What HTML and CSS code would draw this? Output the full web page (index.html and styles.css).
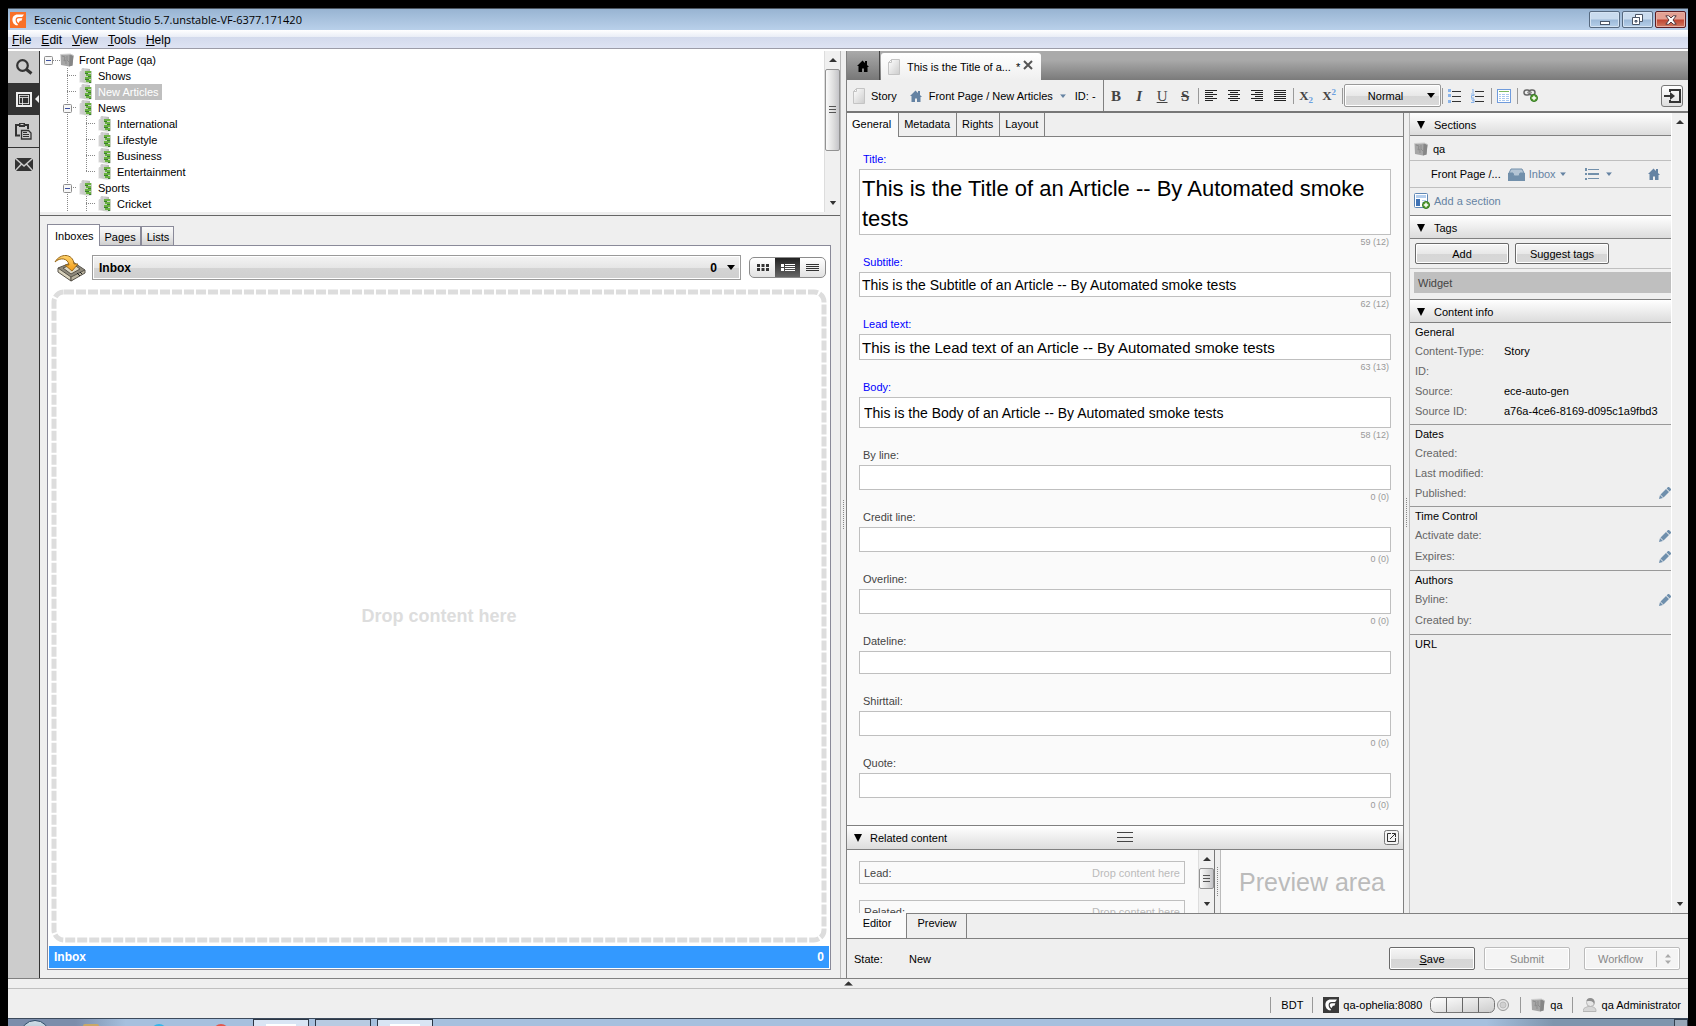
FILE: index.html
```html
<!DOCTYPE html>
<html lang="en">
<head>
<meta charset="utf-8">
<title>Escenic Content Studio</title>
<link rel="stylesheet" href="styles.css">
</head>
<body>
<svg class="defs" aria-hidden="true">
  <defs>
    <linearGradient id="g-grey" x1="0" y1="0" x2="1" y2="1"><stop offset="0" stop-color="#fff"/><stop offset="1" stop-color="#ccc"/></linearGradient>
    <linearGradient id="g-shield" x1="0" y1="0" x2="1" y2="0"><stop offset="0" stop-color="#f0f0f0"/><stop offset="1" stop-color="#a8a8a8"/></linearGradient>
    <linearGradient id="g-arrow" x1="0" y1="0" x2="0" y2="1"><stop offset="0" stop-color="#ffd36b"/><stop offset="1" stop-color="#f39a13"/></linearGradient>
    <symbol id="i-logo" viewBox="0 0 16 16"><path d="M14 2.6H7.6C4.3 2.6 2.4 5 2.4 7.8c0 3 2 5.4 5 5.8l.6-1.4C6.500 11.400 5.600 9.900 5.600 8c0-2 1-3.100 3-3.100h3.600z" fill="#fff"/><path d="M12.400 6.200H8.800c-1.300 0-2 .8-2 1.900 0 1.400.7 2.400 1.800 3l1.300-2.400h1.500z" fill="#fff"/></symbol>
    <symbol id="i-section" viewBox="0 0 14 16"><path d="M0 4l2-1V1l2-1 7 1v2l2 1v11l-4 .5-9-1z" fill="url(#g-shield)"/><path d="M2 3v11M4 0v14" stroke="#bdbdbd" fill="none"/><path d="M5 3h8v12H5z" fill="#c9d2c4"/><path d="M6 3h6v2H6zM7 6h5v2H7zM6 9h6v2H6zM7 12h5v2H7z" fill="#69b23f"/><path d="M6 5h3v1H6zM9 8h3v1H9zM6 11h4v1H6zM10 14h2v1h-2z" fill="#3b7a34"/></symbol>
    <symbol id="i-pub" viewBox="0 0 14 14"><path d="M.5 1.500l10-.5 3 1.500-1 10-3.500 1-8-1.500z" fill="#a6a6a6"/><path d="M9.500 2l4 .5-1 10-3.500 1z" fill="#868686"/><path d="M2 3l3 1-1 4 2-1v4M7 3v4l2 2" stroke="#8d8d8d" fill="none"/><path d="M.5 1.500l10-.5 3 1.500" stroke="#cfcfcf" fill="none"/></symbol>
    <symbol id="i-doc" viewBox="0 0 12 16"><path d="M3.500.5h8v15h-11v-12z" fill="url(#g-grey)" stroke="#c4c4c4"/><path d="M.5 3.500h3v-3z" fill="#fff" stroke="#c4c4c4"/></symbol>
    <symbol id="i-house" viewBox="0 0 12 12"><path d="M0 6l5.500-5.500L8 3V1h2v4l2 2h-1.500v5H7V8.500H5V12H1.500V6z" fill="currentColor"/></symbol>
    <symbol id="i-pencil" viewBox="0 0 12 12"><path d="M0 12l1-4 3 3zM1.500 7.500L7 2l3 3-5.500 5.500zM7.600 1.400L9 0h1l2 2v1l-1.400 1.400z" fill="#6f8fac"/></symbol>
    <symbol id="i-down" viewBox="0 0 8 5"><path d="M0 0h8L4 5z" fill="currentColor"/></symbol>
    <symbol id="i-tri" viewBox="0 0 8 8"><path d="M0 0h8L4 8z" fill="#000"/></symbol>
    <symbol id="i-up" viewBox="0 0 8 4"><path d="M0 4h8L4 0z" fill="#333"/></symbol>
    <symbol id="i-plus" viewBox="0 0 8 8"><circle cx="4" cy="4" r="3.500" fill="#5a9e32" stroke="#2f7a1e"/><path d="M4 1.800v4.400M1.800 4h4.400" stroke="#fff" stroke-width="1.400"/></symbol>
    <symbol id="i-minus" viewBox="0 0 9 9"><rect x=".5" y=".5" width="8" height="8" rx="1" fill="#f7f7f7" stroke="#8e8e8e"/><path d="M2 4.500h5" stroke="#3b4fa0"/></symbol>
  </defs>
</svg>

<div class="desktop">
  <div class="window">
    <header class="titlebar">
      <svg class="app-logo" width="16" height="16"><use href="#i-logo"/></svg>
      <h1 class="window-title">Escenic Content Studio 5.7.unstable-VF-6377.171420</h1>
      <div class="window-buttons">
        <button class="win-btn" aria-label="Minimize"><svg width="12" height="14" viewBox="0 0 12 14"><rect x="1.500" y="8.500" width="9" height="3" fill="#fff" stroke="#4a5566"/></svg></button>
        <button class="win-btn" aria-label="Restore"><svg width="14" height="12" viewBox="0 0 14 12"><path d="M4.500.5h7v7h-3v-4h-4z" fill="#fff" stroke="#4a5566"/><path d="M1.500 3.500h7v7h-7zM4 6.500v1.500h2V6.500z" fill="#fff" stroke="#4a5566"/></svg></button>
        <button class="win-btn win-close" aria-label="Close"><svg width="12" height="10" viewBox="0 0 12 10"><path d="M.8.8h3L6 3 8.200.8h3L8 5l3.200 4.200h-3L6 7 3.800 9.200h-3L4 5z" fill="#fff" stroke="#54393f"/></svg></button>
      </div>
    </header>

    <nav class="menubar" aria-label="Main menu">
      <button><u>F</u>ile</button><button><u>E</u>dit</button><button><u>V</u>iew</button><button><u>T</u>ools</button><button><u>H</u>elp</button>
    </nav>

    <main class="workspace">
      <nav class="rail" aria-label="Panels">
        <button class="rail-btn" aria-label="Search"><svg width="18" height="18" viewBox="0 0 18 18"><circle cx="7.500" cy="7.500" r="5.300" fill="none" stroke="#333" stroke-width="2.200"/><path d="M11.500 11.500l5 4" stroke="#333" stroke-width="3"/></svg></button>
        <button class="rail-btn rail-active" aria-label="Sections"><svg width="16" height="15" viewBox="0 0 16 15"><path d="M1 1h14v13H1z" fill="none" stroke="#eee" stroke-width="2"/><path d="M3 5.500h10M6.500 6v7M3.500 3v9M12.500 3v9M3 3.500h10M3 11.500h10" stroke="#eee" stroke-opacity=".8" fill="none"/></svg></button>
        <button class="rail-btn rail-last" aria-label="Clipboard"><svg width="17" height="17" viewBox="0 0 17 17"><path d="M5 12.500H1V2h12v4" fill="none" stroke="#333" stroke-width="2"/><path d="M4 0h6v4H4z" fill="#333"/><path d="M5.500 1.500h3" stroke="#ccc"/><path d="M6.500 7.500h7l2.500 2.500v6H6.500z" fill="#ccc" stroke="#333" stroke-width="1.300"/><path d="M8 9.500h4M8 11.500h6M8 13.500h6" stroke="#333"/></svg></button>
        <button class="rail-btn" aria-label="Messages"><svg width="18" height="13" viewBox="0 0 18 13"><path d="M0 0h18v13H0z" fill="#333"/><path d="M0 0l9 8 9-8M0 13l6.500-7M18 13l-6.500-7" fill="none" stroke="#ccc" stroke-width="1.500"/></svg></button>
      </nav>

      <section class="left">
        <div class="tree-pane">
          <ul class="tree" aria-label="Sections">
            <li class="row"><svg class="toggle root" width="9" height="9"><use href="#i-minus"/></svg><i class="stub"></i><svg class="ticon" width="14" height="14"><use href="#i-pub"/></svg><a href="#">Front Page (qa)</a></li>
            <li class="row"><i class="gap"></i><i class="branch"></i><svg class="ticon" width="14" height="16"><use href="#i-section"/></svg><a href="#">Shows</a></li>
            <li class="row"><i class="gap"></i><i class="branch"></i><svg class="ticon" width="14" height="16"><use href="#i-section"/></svg><a href="#" class="selected">New Articles</a></li>
            <li class="row"><i class="gap"></i><i class="branch"><svg width="9" height="9"><use href="#i-minus"/></svg></i><svg class="ticon" width="14" height="16"><use href="#i-section"/></svg><a href="#">News</a></li>
            <li class="row"><i class="gap"></i><i class="guide"></i><i class="branch"></i><svg class="ticon" width="14" height="16"><use href="#i-section"/></svg><a href="#">International</a></li>
            <li class="row"><i class="gap"></i><i class="guide"></i><i class="branch"></i><svg class="ticon" width="14" height="16"><use href="#i-section"/></svg><a href="#">Lifestyle</a></li>
            <li class="row"><i class="gap"></i><i class="guide"></i><i class="branch"></i><svg class="ticon" width="14" height="16"><use href="#i-section"/></svg><a href="#">Business</a></li>
            <li class="row"><i class="gap"></i><i class="guide"></i><i class="branch end"></i><svg class="ticon" width="14" height="16"><use href="#i-section"/></svg><a href="#">Entertainment</a></li>
            <li class="row"><i class="gap"></i><i class="branch"><svg width="9" height="9"><use href="#i-minus"/></svg></i><svg class="ticon" width="14" height="16"><use href="#i-section"/></svg><a href="#">Sports</a></li>
            <li class="row"><i class="gap"></i><i class="guide"></i><i class="branch"></i><svg class="ticon" width="14" height="16"><use href="#i-section"/></svg><a href="#">Cricket</a></li>
          </ul>
          <div class="scrollbar" aria-hidden="true">
            <svg width="8" height="4"><use href="#i-up"/></svg>
            <div class="thumb thumb-tree"></div>
            <svg class="sb-down" width="8" height="4" viewBox="0 0 8 5"><use href="#i-down"/></svg>
          </div>
        </div>

        <div class="lists-pane">
          <div class="tabs" role="tablist">
            <button class="tab tab-on" role="tab" aria-selected="true">Inboxes</button>
            <button class="tab" role="tab">Pages</button>
            <button class="tab" role="tab">Lists</button>
          </div>
          <div class="inbox-panel">
            <div class="inbox-bar">
              <svg width="32" height="28" viewBox="0 0 32 28"><path d="M4 14l15-6 12 8-14 11z" fill="#8f8a7c" stroke="#57534a"/><path d="M4 14l13 9v4L4 18z" fill="#d8d2bc" stroke="#57534a"/><path d="M17 23l14-7v3L17 27z" fill="#b9b39e" stroke="#57534a"/><path d="M9 14l10-4 7 5-9 5z" fill="#dcd6c2" stroke="#57534a"/><path d="M23 19l3 3M26 18l2 2" stroke="#222"/><path d="M1 8C6-1 19-1 20 10h4l-6 7-7-6h4C14 4 6 3 1 8z" fill="url(#g-arrow)" stroke="#9a6a1c"/></svg>
              <div class="inbox-select">
                <select aria-label="Inbox"><option>Inbox</option></select>
                <span>0</span>
                <svg width="8" height="5"><use href="#i-down"/></svg>
              </div>
              <div class="view-switch">
                <button aria-label="Grid"><svg width="12" height="7" viewBox="0 0 12 7"><path d="M0 0h3v3H0zM4.500 0h3v3h-3zM9 0h3v3H9zM0 4h3v3H0zM4.500 4h3v3h-3zM9 4h3v3H9z" fill="#333"/></svg></button>
                <button class="on" aria-label="Detailed list"><svg width="14" height="8" viewBox="0 0 14 8"><path d="M0 0h3v3H0zM0 4h3v3H0zM4 0h10v1H4zM4 2h10v1H4zM4 4h10v1H4zM4 6h10v1H4z" fill="#fff"/></svg></button>
                <button aria-label="List"><svg width="13" height="8" viewBox="0 0 13 8"><path d="M0 .5h13M0 2.500h13M0 4.500h13M0 6.500h13" stroke="#333"/></svg></button>
              </div>
            </div>
            <div class="dropzone">
              <svg class="dash" aria-hidden="true"><rect class="dash-rect" x="3" y="3" rx="10"/></svg>
              <p>Drop content here</p>
            </div>
            <div class="inbox-total"><span>Inbox</span><span>0</span></div>
          </div>
        </div>
      </section>

      <div class="splitter"><i class="grip"></i></div>

      <section class="right">
        <div class="doc-tabs">
          <button class="home-tab" aria-label="Home"><svg width="12" height="12"><use href="#i-house"/></svg></button>
          <div class="doc-tab">
            <svg width="12" height="16"><use href="#i-doc"/></svg>
            <span class="doc-name">This is the Title of a...</span><span>*</span>
            <button aria-label="Close tab"><svg width="10" height="10" viewBox="0 0 10 10"><path d="M1 1l8 8M9 1L1 9" stroke="#555" stroke-width="2"/></svg></button>
          </div>
        </div>

        <div class="toolbar">
          <div class="crumbs">
            <svg width="12" height="16"><use href="#i-doc"/></svg><span class="kind">Story</span>
            <svg class="blue" width="12" height="12"><use href="#i-house"/></svg><a class="path" href="#">Front Page / New Articles</a>
            <svg class="blue" width="6" height="4" viewBox="0 0 8 5"><use href="#i-down"/></svg><span class="doc-id">ID: -</span>
          </div>
          <button class="tool serif" aria-label="Bold"><b>B</b></button>
          <button class="tool serif" aria-label="Italic"><b><em>I</em></b></button>
          <button class="tool serif" aria-label="Underline"><u>U</u></button>
          <button class="tool serif" aria-label="Strikethrough"><s>S</s></button>
          <i class="sep"></i>
          <button class="tool" aria-label="Align left"><svg width="12" height="12" viewBox="0 0 12 12"><path d="M0 .5h12M0 2.500h8M0 4.500h12M0 6.500h8M0 8.500h12M0 10.500h8" stroke="#222"/></svg></button>
          <button class="tool" aria-label="Align centre"><svg width="12" height="12" viewBox="0 0 12 12"><path d="M0 .5h12M2 2.500h8M0 4.500h12M2 6.500h8M0 8.500h12M2 10.500h8" stroke="#222"/></svg></button>
          <button class="tool" aria-label="Align right"><svg width="12" height="12" viewBox="0 0 12 12"><path d="M0 .5h12M4 2.500h8M0 4.500h12M4 6.500h8M0 8.500h12M4 10.500h8" stroke="#222"/></svg></button>
          <button class="tool" aria-label="Justify"><svg width="12" height="12" viewBox="0 0 12 12"><path d="M0 .5h12M0 2.500h12M0 4.500h12M0 6.500h12M0 8.500h12M0 10.500h12" stroke="#222"/></svg></button>
          <i class="sep"></i>
          <button class="tool script" aria-label="Subscript"><b>X</b><sub>2</sub></button>
          <button class="tool script" aria-label="Superscript"><b>X</b><sup>2</sup></button>
          <i class="sep"></i>
          <div class="style-select"><select aria-label="Paragraph style"><option>Normal</option></select><svg width="8" height="5"><use href="#i-down"/></svg></div>
          <i class="sep"></i>
          <button class="tool" aria-label="Bulleted list"><svg width="14" height="14" viewBox="0 0 14 14"><path d="M0 0h3v3H0zM0 5h3v3H0zM0 11h3v3H0z" fill="#8ab4ea"/><path d="M4 2.500h9M4 7.500h9M4 12.500h9" stroke="#333"/></svg></button>
          <button class="tool" aria-label="Numbered list"><svg width="14" height="14" viewBox="0 0 14 14"><path d="M1 0h1v4M0 5h3v1.500H.5V9H3M0 10h3v3.500H0M1 11.700h2" fill="none" stroke="#8ab4ea"/><path d="M4 2.500h9M4 7.500h9M4 12.500h9" stroke="#333"/></svg></button>
          <i class="sep"></i>
          <button class="tool" aria-label="Insert table"><svg width="14" height="14" viewBox="0 0 14 14"><rect x=".5" y=".5" width="13" height="13" fill="#fff" stroke="#6f9bdc"/><path d="M2 2.500h10" stroke="#7cb860"/><path d="M2 5.500h10M2 7.500h10M2 9.500h10M2 11.500h10" stroke="#a9c8ef"/><path d="M4.500 4v8M8.500 4v8" stroke="#fff"/></svg></button>
          <i class="sep"></i>
          <button class="tool" aria-label="Insert link"><svg width="15" height="13" viewBox="0 0 15 13"><rect x="1" y="1" width="6" height="5" rx="2.500" fill="none" stroke="#666" stroke-width="1.500"/><rect x="6" y="1" width="6" height="5" rx="2.500" fill="none" stroke="#666" stroke-width="1.500"/><path d="M4 3.500h5" stroke="#999" stroke-width="1.500"/><use href="#i-plus" x="7" y="5" width="8" height="8"/></svg></button>
          <button class="dock" aria-label="Toggle side panel"><svg width="17" height="14" viewBox="0 0 17 14"><path d="M6 3V1h10v12H6v-2" fill="none" stroke="#333" stroke-width="2"/><path d="M0 6h6V3l5 4-5 4V8H0z" fill="#333"/></svg></button>
        </div>

        <div class="doc-body">
          <div class="editor">
            <div class="subtabs" role="tablist">
              <button class="on" role="tab" aria-selected="true">General</button><button role="tab">Metadata</button><button role="tab">Rights</button><button role="tab">Layout</button>
            </div>
            <form class="fields">
              <div class="field req"><label for="f1">Title:</label><textarea id="f1" class="f-title" rows="2">This is the Title of an Article -- By Automated smoke tests</textarea><output>59 (12)</output></div>
              <div class="field req"><label for="f2">Subtitle:</label><input id="f2" class="f-sub" value="This is the Subtitle of an Article -- By Automated smoke tests"><output>62 (12)</output></div>
              <div class="field req"><label for="f3">Lead text:</label><input id="f3" class="f-lead" value="This is the Lead text of an Article -- By Automated smoke tests"><output>63 (13)</output></div>
              <div class="field req"><label for="f4">Body:</label><input id="f4" class="f-body" value="This is the Body of an Article -- By Automated smoke tests"><output>58 (12)</output></div>
              <div class="field"><label for="f5">By line:</label><input id="f5"><output>0 (0)</output></div>
              <div class="field"><label for="f6">Credit line:</label><input id="f6"><output>0 (0)</output></div>
              <div class="field"><label for="f7">Overline:</label><input id="f7"><output>0 (0)</output></div>
              <div class="field"><label for="f8">Dateline:</label><input id="f8" class="f-date"><output></output></div>
              <div class="field"><label for="f9">Shirttail:</label><input id="f9"><output>0 (0)</output></div>
              <div class="field"><label for="f10">Quote:</label><input id="f10"><output>0 (0)</output></div>
            </form>
            <section class="related">
              <header class="related-head">
                <h2><svg width="8" height="8"><use href="#i-tri"/></svg>Related content</h2>
                <svg width="16" height="11" viewBox="0 0 16 11"><path d="M0 .5h16M0 5.500h16M0 9.500h16" stroke="#444"/></svg>
                <button aria-label="Open in window"><svg width="15" height="15" viewBox="0 0 15 15"><rect x=".5" y=".5" width="14" height="14" rx="2" fill="#f4f4f4" stroke="#777"/><path d="M7 3.500H3.500v8h8V8M6 9l5-5M8 3.500h3.500V7" fill="none" stroke="#333"/></svg></button>
              </header>
              <div class="related-body">
                <div class="relations">
                  <div class="relation"><span>Lead:</span><span class="hint">Drop content here</span></div>
                  <div class="relation"><span>Related:</span><span class="hint">Drop content here</span></div>
                </div>
                <div class="scrollbar" aria-hidden="true">
                  <svg width="8" height="4"><use href="#i-up"/></svg>
                  <div class="thumb thumb-rel"></div>
                  <svg class="sb-down" width="8" height="4" viewBox="0 0 8 5"><use href="#i-down"/></svg>
                </div>
                <div class="splitter thin"><i class="grip"></i></div>
                <div class="preview">Preview area</div>
              </div>
            </section>
          </div>

          <div class="splitter side"><i class="grip"></i></div>

          <aside class="side-panel">
            <div class="side-content">
              <section>
                <h2 class="side-head"><svg width="8" height="8"><use href="#i-tri"/></svg>Sections</h2>
                <div class="srow s-pub"><svg width="14" height="14"><use href="#i-pub"/></svg>qa</div>
                <div class="srow s-home">
                  <span class="s-path">Front Page /...</span>
                  <svg width="17" height="13" viewBox="0 0 17 13"><path d="M3 1h11l2 4h-4l-1 3H6L5 5H1z" fill="#b4c5d4" stroke="#7290ab"/><path d="M0 5h5l1 3h5l1-3h5v8H0z" fill="#7290ab"/></svg>
                  <a href="#" class="blue s-inbox">Inbox</a>
                  <svg class="blue s-arrow" width="6" height="4" viewBox="0 0 8 5"><use href="#i-down"/></svg>
                  <svg width="14" height="12" viewBox="0 0 14 12"><path d="M0 0h2v3H0zM0 5h2v2H0zM0 10h2v2H0zM3 1h11v1H3zM3 5h11v2H3zM3 10h11v1H3z" fill="#7290ab"/></svg>
                  <svg class="blue s-arrow2" width="6" height="4" viewBox="0 0 8 5"><use href="#i-down"/></svg>
                  <svg class="blue s-house" width="12" height="12"><use href="#i-house"/></svg>
                </div>
                <div class="srow s-add"><svg width="16" height="16" viewBox="0 0 16 16"><rect x=".5" y=".5" width="13" height="14" rx="1" fill="#fff" stroke="#5f87b4"/><path d="M2 2h10v3H2z" fill="#b5cfee"/><path d="M2 6h4v7H2z" fill="#3f72b5"/><path d="M8 7.500h4M8 9.500h4" stroke="#b5cfee"/><use href="#i-plus" x="8" y="8" width="8" height="8"/></svg><a href="#" class="blue">Add a section</a></div>
              </section>
              <section>
                <h2 class="side-head"><svg width="8" height="8"><use href="#i-tri"/></svg>Tags</h2>
                <div class="tag-buttons"><button class="btn">Add</button><button class="btn">Suggest tags</button></div>
                <div class="tags"><span class="tag">Widget</span></div>
              </section>
              <section>
                <h2 class="side-head"><svg width="8" height="8"><use href="#i-tri"/></svg>Content info</h2>
                <div class="info"><h3>General</h3><dl>
                  <dt>Content-Type:</dt><dd>Story</dd><dt>ID:</dt><dd></dd><dt>Source:</dt><dd>ece-auto-gen</dd><dt>Source ID:</dt><dd>a76a-4ce6-8169-d095c1a9fbd3</dd></dl></div>
                <div class="info"><h3>Dates</h3><dl>
                  <dt>Created:</dt><dd></dd><dt>Last modified:</dt><dd></dd><dt>Published:</dt><dd><button aria-label="Edit published date"><svg width="12" height="12"><use href="#i-pencil"/></svg></button></dd></dl></div>
                <div class="info tall"><h3>Time Control</h3><dl>
                  <dt>Activate date:</dt><dd><button aria-label="Edit activate date"><svg width="12" height="12"><use href="#i-pencil"/></svg></button></dd><dt>Expires:</dt><dd><button aria-label="Edit expiry"><svg width="12" height="12"><use href="#i-pencil"/></svg></button></dd></dl></div>
                <div class="info tall"><h3>Authors</h3><dl>
                  <dt>Byline:</dt><dd><button aria-label="Edit byline"><svg width="12" height="12"><use href="#i-pencil"/></svg></button></dd><dt>Created by:</dt><dd></dd></dl></div>
                <div class="info last"><h3>URL</h3></div>
              </section>
            </div>
            <div class="scrollbar wide" aria-hidden="true">
              <svg width="8" height="4"><use href="#i-up"/></svg>
              <svg class="sb-down" width="8" height="4" viewBox="0 0 8 5"><use href="#i-down"/></svg>
            </div>
          </aside>
        </div>

        <div class="mode-tabs" role="tablist"><button class="on" role="tab" aria-selected="true">Editor</button><button role="tab">Preview</button></div>

        <div class="state-bar">
          <span class="state-label">State:</span><span>New</span>
          <div class="actions">
            <button class="btn big"><u>S</u>ave</button>
            <button class="btn big" disabled>Submit</button>
            <button class="btn workflow" disabled><span>Workflow</span><svg width="8" height="10" viewBox="0 0 8 10"><path d="M1 3.500L4 0l3 3.500zM1 6.500L4 10l3-3.500z" fill="#aaa"/></svg></button>
          </div>
        </div>
      </section>
    </main>

    <div class="fold"><svg width="9" height="5" viewBox="0 0 8 4"><use href="#i-up"/></svg></div>

    <footer class="status">
      <span class="st st-zone">BDT</span>
      <span class="st st-host"><svg class="host-logo" width="16" height="16"><use href="#i-logo"/></svg>qa-ophelia:8080
        <svg class="gauge" width="80" height="16" viewBox="0 0 80 16"><rect x=".5" y=".5" width="64" height="15" rx="5" fill="url(#g-grey)" stroke="#777"/><path d="M16.500 1v14M32.500 1v14M48.500 1v14" stroke="#666"/><circle cx="73" cy="8" r="5.500" fill="#e4e4e4" stroke="#999"/><circle cx="73" cy="8" r="3" fill="#d0d0d0" stroke="#bbb"/></svg></span>
      <span class="st st-pub"><svg width="14" height="14"><use href="#i-pub"/></svg>qa</span>
      <span class="st st-user"><svg width="14" height="15" viewBox="0 0 14 15"><path d="M0 14.500c0-4 3-4 5-5h4c2 1 4 1 4 5z" fill="#d6d6d6" stroke="#b5b5b5"/><circle cx="7.500" cy="5.500" r="4" fill="#e6e6e6" stroke="#b5b5b5"/><path d="M3.500 4C4 0 11 0 11.500 5l-.5 3c0-3-2-4-4-4z" fill="#8f8f8f"/></svg>qa Administrator</span>
    </footer>

    <div class="taskbar" aria-hidden="true">
      <i class="orb"></i><i class="dot gold"></i><i class="dot cyan"></i><i class="dot red"></i><i class="task"></i><i class="task active"></i><i class="task"></i><i class="show-desktop"></i>
    </div>
  </div>
</div>
</body>
</html>
```
FILE: styles.css
```css
* { box-sizing: border-box; }
body { margin: 0; background: #000; font: 11px/16px "Liberation Sans", Arial, sans-serif; color: #000; }
button, input, select, textarea { font: inherit; color: inherit; }
button { padding: 0; border: 0; background: none; }
a { color: inherit; text-decoration: none; }
h1, h2, h3, p, ul, dl, dd { margin: 0; padding: 0; font: inherit; }
svg { flex: none; display: block; }
.defs { position: absolute; width: 0; height: 0; }
.blue { color: #6583a3; }

.desktop { height: 100vh; padding: 8px 8px 0; display: flex; }
.window { flex: 1; min-width: 0; display: flex; flex-direction: column; background: #efefef; overflow: hidden; }

/* title bar */
.titlebar { height: 22px; flex: none; display: flex; align-items: center; padding: 0 2px; background: linear-gradient(#98b4d2, #b9d0ea); border-top: 1px solid #4b5560; }
.app-logo { background: #f97128; }
.window-title { flex: 1; margin-left: 8px; font: 11px/16px "Open Sans", "Noto Sans", sans-serif; }
.window-buttons { display: flex; gap: 2px; }
.win-btn { width: 31px; height: 17px; display: grid; place-items: center; border: 1px solid #56697f; border-radius: 2px; background: linear-gradient(#c9dbee 48%, #9cb9d8 52%, #b5cfe9); box-shadow: inset 0 0 0 1px #d4e3f3; }
.win-close { border-color: #5c1c22; background: linear-gradient(#e3a093 48%, #c04431 52%, #cf7a62); box-shadow: inset 0 0 0 1px #e6b0a4; }

/* menu bar */
.menubar { height: 21px; flex: none; display: flex; gap: 10px; padding: 0 4px; font-size: 12px; background: linear-gradient(#fff, #e9edf6 7px, #d3daec 7px, #dfe4f4); border-bottom: 2px solid #fff; box-shadow: inset 0 -1px #9c9ca8; }

/* workspace */
.workspace { flex: 1; min-height: 0; display: grid; grid-template-columns: 32px minmax(0, 800fr) 7px minmax(0, 841fr); grid-template-rows: minmax(0, 1fr); border-bottom: 1px solid #808080; }
.rail { background: #ccc; border-right: 1px solid #333; }
.rail-btn { width: 31px; height: 32px; display: grid; place-items: center; }
.rail-active { position: relative; background: #333; }
.rail-active::after { content: ""; position: absolute; right: 0; top: 12px; border: solid transparent; border-width: 4px 4px 4px 0; border-right-color: #efefef; }
.rail-last { height: 33px; border-bottom: 1px solid #333; }

.left { display: flex; flex-direction: column; min-width: 0; }
.tree-pane { height: 165px; flex: none; display: flex; padding-bottom: 3px; border-bottom: 1px solid #666; overflow: hidden; }
.tree { flex: 1; list-style: none; padding: 1px 0 0 4px; background: #fff; overflow: hidden; }
.row { display: flex; align-items: center; height: 16px; }
.row a { padding: 0 3px; line-height: 16px; }
.row .selected { background: #bfbfbf; color: #fff; }
.ticon { margin-right: 2px; }
.gap { width: 19px; }
.guide, .branch { height: 16px; background: repeating-linear-gradient(180deg, #888 0 1px, transparent 1px 2px) 4px 0 / 1px 100% no-repeat; }
.guide { width: 19px; }
.branch { width: 16px; display: flex; align-items: center; background: repeating-linear-gradient(180deg, #888 0 1px, transparent 1px 2px) 4px 0 / 1px 100% no-repeat, repeating-linear-gradient(90deg, #888 0 1px, transparent 1px 2px) 4px 7px / 10px 1px no-repeat; }
.branch.end { background-size: 1px 8px, 10px 1px; }
.stub { width: 7px; height: 1px; background: repeating-linear-gradient(90deg, #888 0 1px, transparent 1px 2px); }

.scrollbar { width: 16px; flex: none; display: flex; flex-direction: column; align-items: center; padding: 7px 0; background: #f0f0f0; border-left: 1px solid #ddd; }
.sb-down { margin-top: auto; color: #333; }
.thumb { width: 15px; flex: none; margin-top: 7px; border: 1px solid #929292; border-radius: 2px; background: repeating-linear-gradient(#555 0 1px, transparent 1px 3px) 50% 50% / 7px 8px no-repeat, linear-gradient(90deg, #fafafa, #dcdcdc 60%, #c4c4c8); }
.thumb-tree { height: 82px; }
.thumb-rel { height: 21px; }

.lists-pane { flex: 1; min-height: 0; display: flex; flex-direction: column; padding: 8px 9px 8px 7px; }
.tabs { display: flex; align-items: flex-end; height: 21px; flex: none; }
.tab { height: 19px; padding: 2px 4px 0; border: 1px solid #8a8a99; border-bottom: 0; background: linear-gradient(#fafafa, #e8e8e8 55%, #cfcfcf); }
.tab + .tab { margin-right: 1px; margin-left: -1px; padding-left: 5px; }
.tab-on { position: relative; height: 22px; margin-bottom: -1px; padding: 0 5px 0 7px; background: #fff; }
.inbox-panel { flex: 1; min-height: 0; display: flex; flex-direction: column; padding: 0 1px 1px; border: 1px solid #8a8a99; background: #fff; }
.inbox-bar { display: flex; align-items: center; height: 41px; flex: none; padding: 2px 3px 0 5px; gap: 6px; }
.inbox-select { flex: 1; display: flex; align-items: center; height: 25px; margin-right: 2px; padding: 0 5px 0 6px; font: bold 12px/16px "Liberation Sans", Arial, sans-serif; border: 1px solid #9a9a9a; box-shadow: inset 0 0 0 1px #fff; background: linear-gradient(#f4f4f4, #e6e6e6 50%, #d4d4d4 51%, #cfcfcf); }
select { flex: 1; min-width: 0; appearance: none; padding: 0; border: 0; background: none; }
.inbox-select span { margin-right: 10px; }
.view-switch { display: flex; height: 21px; border: 1px solid #8c8c8c; border-radius: 5px; background: linear-gradient(#fff, #e2e2e2); overflow: hidden; }
.view-switch button { width: 25px; display: grid; place-items: center; }
.view-switch .on { background: linear-gradient(#222, #666); }
.dropzone { position: relative; flex: 1; min-height: 0; display: grid; place-items: center; margin: 2px 2px 3px; }
.dropzone p { font: bold 18px/24px "Liberation Sans", Arial, sans-serif; color: #ddd; }
.dash { position: absolute; inset: 0; width: 100%; height: 100%; }
.dash-rect { width: calc(100% - 6px); height: calc(100% - 6px); fill: none; stroke: #ddd; stroke-width: 5; stroke-dasharray: 10 2; }
.inbox-total { height: 22px; flex: none; display: flex; justify-content: space-between; align-items: center; padding: 0 5px; background: #39f; color: #fff; font-size: 12px; font-weight: bold; }

.splitter { display: flex; align-items: center; justify-content: center; border-left: 1px solid #b8b8b8; border-right: 1px solid #808080; background: #efefef; }
.grip { width: 1px; height: 30px; background: repeating-linear-gradient(#888 0 1px, transparent 1px 2px); }

/* document */
.right { display: flex; flex-direction: column; min-width: 0; }
.doc-tabs { height: 29px; flex: none; display: flex; align-items: flex-end; gap: 1px; background: linear-gradient(#aaa 30%, #7a7a7a); }
.home-tab { width: 33px; height: 29px; display: grid; place-items: center; border-right: 1px solid #444; background: linear-gradient(#aaa, #777); }
.doc-tab { height: 27px; display: flex; align-items: center; padding: 0 8px 0 7px; border-radius: 3px 3px 0 0; background: linear-gradient(#fff, #efefef); }
.doc-name { margin: 0 5px 0 7px; }
.doc-tab button { margin: 0 0 3px 3px; }
.toolbar { height: 33px; flex: none; display: flex; align-items: center; border-bottom: 2px solid #777; }
.crumbs { align-self: stretch; display: flex; align-items: center; padding: 0 7px 0 6px; border-right: 1px solid #808080; }
.kind { margin: 0 13px 0 6px; }
.path { margin: 0 7px; }
.doc-id { margin-left: 9px; }
.tool { width: 23px; height: 22px; flex: none; display: flex; align-items: center; justify-content: center; }
.serif { font: 15px/20px "Liberation Serif", serif; color: #444; }
.serif s { font-weight: bold; }
.script { font: 13px/20px "Liberation Serif", serif; color: #444; }
.script sub, .script sup { font: bold 9px/10px "Liberation Serif", serif; color: #6aa0e0; }
.script sub { padding-top: 8px; }
.script sup { padding-bottom: 8px; }
.sep { width: 1px; height: 16px; flex: none; margin: 0 1px; background: #999; }
.crumbs + .tool { margin-left: 1px; }
.style-select { width: 97px; height: 23px; flex: none; display: flex; align-items: center; padding-right: 5px; border: 1px solid #999; border-radius: 2px; box-shadow: inset 0 0 0 1px #fff; background: linear-gradient(#f8f8f8, #e8e8e8 50%, #d6d6d6 52%, #dadada); }
.style-select select { text-align: center; text-align-last: center; }
.dock { width: 22px; height: 22px; margin: 0 5px 0 auto; display: grid; place-items: center; border: 1px solid #777; border-radius: 3px; background: linear-gradient(#fff, #ddd); }

.doc-body { flex: 1; min-height: 0; display: grid; grid-template-columns: minmax(0, 1fr) 6px 278px; grid-template-rows: minmax(0, 1fr); }
.editor { display: flex; flex-direction: column; min-width: 0; background: #fafafa; border-right: 1px solid #808080; }
.subtabs { display: flex; height: 24px; flex: none; background: linear-gradient(#808080, #808080) 0 100% / 100% 1px no-repeat #efefef; }
.subtabs button { padding: 0 6px 2px 5px; border-right: 1px solid #808080; }
.subtabs .on { padding-right: 7px; background: #fafafa; }
.fields { flex: 1; min-height: 0; overflow: hidden; padding: 12px 12px 0; }
.field { display: flex; flex-direction: column; margin-bottom: 3px; }
.field label { padding-left: 4px; line-height: 20px; color: #444; }
.req label { color: #00f; }
.field output { height: 14px; padding-right: 2px; text-align: right; font-size: 9px; line-height: 14px; color: #999; }
.field input, .field textarea { width: 100%; height: 25px; margin: 0; padding: 0 2px; border: 1px solid #bfbfbf; border-radius: 0; background: #fff; }
.field .f-title { height: 66px; padding: 4px 2px 0; font-size: 22px; line-height: 30px; resize: none; overflow: hidden; }
.field .f-sub { font-size: 14px; }
.field .f-lead { height: 26px; font-size: 15px; }
.field .f-body { height: 31px; padding: 0 4px; font-size: 14px; }
.field .f-date { height: 23px; }

.related { flex: none; height: 88px; border-top: 1px solid #808080; }
.related-head { display: grid; grid-template-columns: 1fr auto 1fr; align-items: center; height: 24px; padding: 0 4px; background: linear-gradient(#fff, #ddd); border-bottom: 1px solid #808080; }
.related-head h2 { display: flex; align-items: center; gap: 8px; padding-left: 3px; }
.related-head button { justify-self: end; }
.related-body { display: flex; height: 63px; overflow: hidden; }
.relations { flex: 1; padding: 11px 13px 0 12px; display: flex; flex-direction: column; gap: 16px; }
.relation { height: 23px; flex: none; display: flex; justify-content: space-between; align-items: center; padding: 0 4px; border: 1px solid #bfbfbf; color: #444; }
.hint { color: #bbb; }
.thin { width: 7px; border-left-color: #777; border-right-color: #bbb; }
.preview { width: 182px; display: grid; place-items: center; font-size: 25px; line-height: 28px; color: #bbb; }

/* side panel */
.side { border-left: 0; border-right-color: #bbb; }
.side-panel { display: flex; min-width: 0; }
.side-content { flex: 1; min-width: 0; }
.side-head { display: flex; align-items: center; gap: 9px; height: 23px; padding: 2px 7px 0; background: linear-gradient(#fff, #dcdcdc); border-bottom: 1px solid #808080; }
.srow { display: flex; align-items: center; padding: 0 4px; }
.s-pub { height: 25px; gap: 5px; padding-top: 2px; border-bottom: 1px solid #bfbfbf; }
.s-home { height: 27px; padding-left: 21px; border-bottom: 1px solid #bfbfbf; }
.s-path { margin-right: 7px; }
.s-inbox { margin: 0 4px; }
.s-arrow { margin-right: 19px; }
.s-arrow2 { margin-left: 7px; }
.s-house { margin: 0 7px 0 auto; }
.s-add { height: 28px; gap: 4px; padding-bottom: 2px; border-bottom: 1px solid #808080; }
.tag-buttons { display: flex; gap: 6px; height: 30px; padding: 4px 5px; border-bottom: 1px solid #bfbfbf; }
.btn { width: 94px; height: 21px; border: 1px solid #6a6a6a; border-radius: 2px; box-shadow: inset 0 0 0 1px #fff; background: linear-gradient(#f6f6f6, #e8e8e8 50%, #d6d6d6 52%, #d8d8d8); }
.tags { height: 31px; padding: 3px 0 0 4px; border-bottom: 1px solid #808080; }
.tag { display: block; height: 21px; padding: 3px 4px; background: #bfbfbf; color: #444; }
.info { padding: 0 0 3px 5px; border-bottom: 1px solid #999; }
.info.last { border: 0; }
.info h3 { line-height: 18px; }
.info dl { display: grid; grid-template-columns: 89px 1fr; grid-auto-rows: 20px; line-height: 20px; }
.tall dl { grid-auto-rows: 21px; }
.info dt { color: #666; }
.info dd { display: flex; align-items: center; }
.info dd button { margin-left: auto; }
.wide { width: 17px; border-left: 1px solid #fff; }

/* bottom */
.mode-tabs { display: flex; height: 26px; flex: none; background: linear-gradient(#808080, #808080) 0 0 / 100% 1px no-repeat; border-bottom: 1px solid #808080; }
.mode-tabs button { min-width: 60px; padding: 0 9px 6px 10px; border-right: 1px solid #808080; }
.mode-tabs .on { background: #fafafa; }
.state-bar { height: 39px; flex: none; display: flex; align-items: center; padding: 0 8px 0 7px; }
.state-label { width: 55px; }
.actions { display: flex; gap: 9px; margin-left: auto; }
.big { width: 86px; height: 23px; }
.btn:disabled { border-color: #bbb; background: #f4f4f4; color: #888; }
.workflow { width: 96px; height: 23px; margin-left: 5px; display: flex; align-items: center; }
.workflow span { flex: 1; border-right: 1px solid #bbb; }
.workflow svg { margin: 0 7px; }
.fold { height: 10px; flex: none; display: flex; align-items: center; justify-content: center; border-bottom: 1px solid #bfbfbf; }
.status { height: 29px; flex: none; display: flex; align-items: center; justify-content: flex-end; padding: 2px 7px 0 0; }
.st { display: flex; align-items: center; height: 16px; padding-left: 10px; border-left: 1px solid #999; white-space: nowrap; }
.st-zone { padding-right: 9px; }
.host-logo { margin-right: 4px; background: #3a3a3a; }
.gauge { margin: 0 10px 0 8px; }
.st-pub svg, .st-user svg { margin-right: 5px; }
.st-pub { padding-right: 9px; }

.taskbar { height: 8px; flex: none; display: flex; align-items: flex-start; overflow: hidden; padding-left: 12px; border-top: 1px solid #3c4a5c; background: linear-gradient(90deg, transparent 88%, #7f95ad 92%), linear-gradient(90deg, #7b8dab 4%, #a6c0de 7%); }
.orb { width: 30px; height: 30px; flex: none; margin-top: 1px; border: 1px solid #2f4d68; border-radius: 50%; background: linear-gradient(#cfdde6, #7fa0b8); }
.dot { width: 16px; height: 16px; flex: none; margin-top: 5px; border-radius: 50%; }
.gold { margin-left: 33px; border-radius: 2px; background: #c9a867; }
.cyan { margin-left: 52px; background: #35b6ea; }
.red { margin-left: 46px; margin-right: 24px; background: #e2574c; }
.task { width: 56px; height: 30px; flex: none; margin-right: 6px; border: 1px solid #2c3644; background: linear-gradient(#fff, #fff) 50% 4px / 30px 20px no-repeat, #d9e5f4; }
.task.active { background: #b8cbe2; }
.show-desktop { width: 14px; height: 10px; flex: none; margin-left: auto; border: 1px solid #333f4e; background: #98a7b8; }
```
